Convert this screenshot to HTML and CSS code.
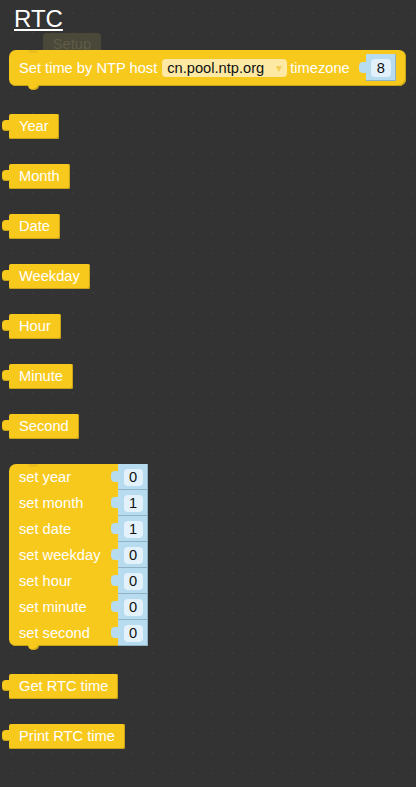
FILE: index.html
```html
<!DOCTYPE html>
<html>

<head>
    <meta charset="utf-8">
    <title>RTC</title>
    <link rel="stylesheet" href="styles.css">
</head>

<body>
    <div class="flyout">
        <h1 class="title">RTC</h1>
        <div class="ghost-btn">Setup</div>

        <div class="block stmt ntp">
            <span class="txt">Set time by NTP host</span>
            <span class="dropdown">cn.pool.ntp.org<span class="arrow">&#9662;</span></span>
            <span class="txt tz">timezone</span>
            <span class="slot wide"><span class="num">8</span></span>
        </div>

        <div class="block value">Year</div>
        <div class="block value">Month</div>
        <div class="block value">Date</div>
        <div class="block value">Weekday</div>
        <div class="block value">Hour</div>
        <div class="block value">Minute</div>
        <div class="block value">Second</div>

        <div class="block stmt rtcset">
            <div class="row"><span class="lbl">set year</span><span class="slot"><span class="num">0</span></span></div>
            <div class="row"><span class="lbl">set month</span><span class="slot"><span class="num">1</span></span></div>
            <div class="row"><span class="lbl">set date</span><span class="slot"><span class="num">1</span></span></div>
            <div class="row"><span class="lbl">set weekday</span><span class="slot"><span class="num">0</span></span></div>
            <div class="row"><span class="lbl">set hour</span><span class="slot"><span class="num">0</span></span></div>
            <div class="row"><span class="lbl">set minute</span><span class="slot"><span class="num">0</span></span></div>
            <div class="row"><span class="lbl">set second</span><span class="slot"><span class="num">0</span></span></div>
        </div>

        <div class="block value">Get RTC time</div>
        <div class="block value">Print RTC time</div>
    </div>
</body>

</html>
```

FILE: styles.css
```css
html,
body {
    margin: 0;
    height: 100%;
}

body {
    background-color: #333333;
    background-image: radial-gradient(circle, #393939 0.8px, transparent 1px);
    background-size: 20px 20px;
    background-position: 3px 3px;
    font-family: "Liberation Sans", Arial, sans-serif;
    font-size: 11pt;
    color: #fff;
}

.flyout {
    position: relative;
    display: flex;
    flex-direction: column;
    align-items: flex-start;
    gap: 25px;
    padding-left: 9px;
}

.title {
    margin: 0 0 -8px 5px;
    padding-top: 5px;
    font-size: 24px;
    line-height: 28px;
    font-weight: normal;
    text-decoration: underline;
    text-decoration-thickness: 2px;
    text-underline-offset: 2px;
}

.ghost-btn {
    position: absolute;
    left: 43px;
    top: 33px;
    width: 58px;
    height: 24px;
    border-radius: 4px;
    background: #4a4839;
    color: #5f5c48;
    text-align: center;
    line-height: 22px;
}

.block {
    position: relative;
    z-index: 1;
    background: #f8c91d;
    box-shadow: inset -1px -1px 0 #c7a218;
    box-sizing: border-box;
}

/* value blocks: output tab on the left */
.value {
    height: 25px;
    line-height: 25px;
    padding: 0 10px 0 10px;
    border-radius: 2px;
}

.value::before {
    content: "";
    position: absolute;
    left: -7px;
    top: 6px;
    width: 8px;
    height: 11px;
    background: #f8c91d;
    border-radius: 4px 0 0 4px;
    box-shadow: inset 0 -1px 0 #c7a218;
}

/* statement blocks: notch on top, tab below */
.stmt {
    border-radius: 7px;
    margin-bottom: 3px;
}

.stmt::before {
    content: "";
    position: absolute;
    left: 19px;
    top: 0;
    width: 10px;
    height: 3px;
    background: #e8bd1c;
    border-radius: 0 0 4px 4px;
}

.stmt::after {
    content: "";
    position: absolute;
    left: 19px;
    bottom: -4px;
    width: 11px;
    height: 5px;
    background: #f8c91d;
    border-radius: 0 0 5px 5px;
    box-shadow: inset -1px -1px 0 #c7a218;
}

.ntp {
    width: 397px;
    height: 36px;
    display: flex;
    align-items: center;
    padding: 0 0 1px 10px;
}

.dropdown {
    margin-left: 5px;
    height: 18px;
    line-height: 18px;
    padding: 0 5px;
    width: 125px;
    box-sizing: border-box;
    border-radius: 4px;
    background: #fde9a3;
    color: #111;
    display: flex;
    justify-content: space-between;
}

.arrow {
    color: #f5cf55;
    font-size: 12px;
}

.tz {
    margin-left: 3px;
}

.slot {
    position: relative;
    display: flex;
    align-items: center;
    justify-content: center;
    width: 30px;
    background: #b7dcf0;
    box-shadow: inset -1px -1px 0 #8fb2c4;
}

.slot::before {
    content: "";
    position: absolute;
    left: -7px;
    top: 7px;
    width: 8px;
    height: 11px;
    background: #b7dcf0;
    border-radius: 4px 0 0 4px;
}

.slot.wide {
    margin-left: 16px;
    height: 27px;
    width: 30px;
}

.slot.wide::before {
    top: 8px;
}

.num {
    width: 19px;
    height: 17px;
    line-height: 17px;
    border-radius: 4px;
    background: #e3f1fa;
    color: #111;
    text-align: center;
}

.slot.wide .num {
    width: 20px;
    height: 18px;
    line-height: 18px;
}

.rtcset {
    display: flex;
    flex-direction: column;
    width: 139px;
    border-radius: 7px 0 0 7px;
}

.row {
    display: flex;
    height: 26px;
}

.lbl {
    width: 109px;
    padding-left: 10px;
    box-sizing: border-box;
    line-height: 26px;
}

.rtcset .slot {
    height: 26px;
}
```
